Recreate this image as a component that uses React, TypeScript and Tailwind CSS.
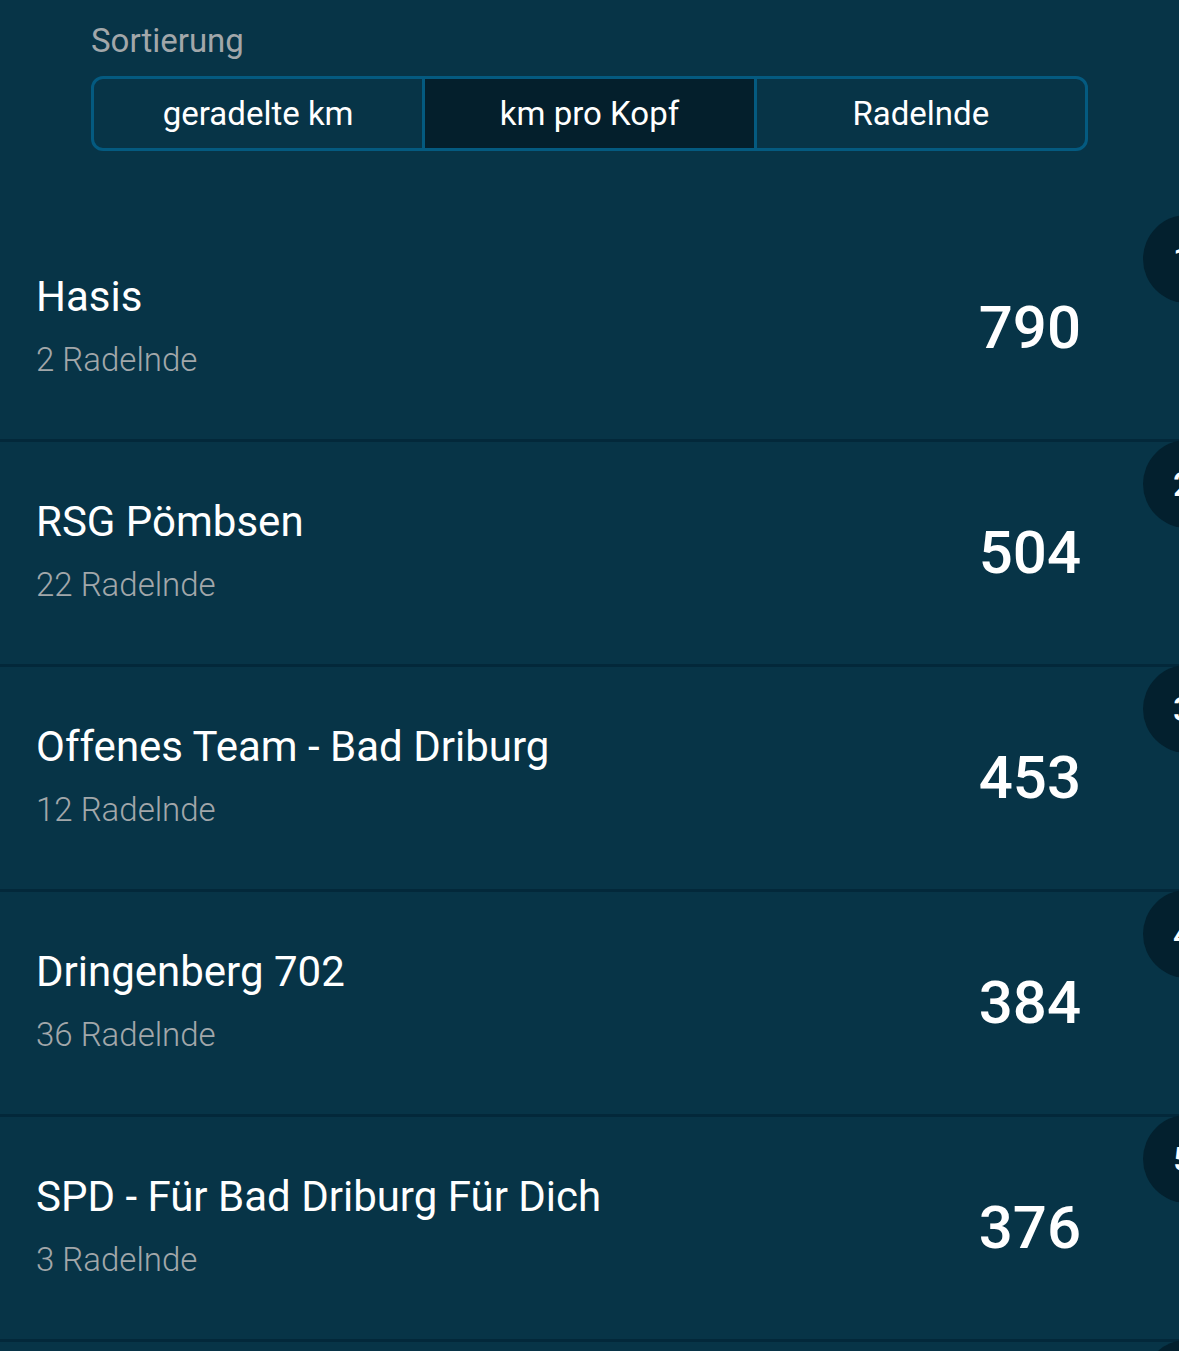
import React from 'react';

type Team = {
    rank: number;
    name: string;
    riders: number;
    km: number;
};

const teams: Team[] = [
    { rank: 1, name: 'Hasis', riders: 2, km: 790 },
    { rank: 2, name: 'RSG Pömbsen', riders: 22, km: 504 },
    { rank: 3, name: 'Offenes Team - Bad Driburg', riders: 12, km: 453 },
    { rank: 4, name: 'Dringenberg 702', riders: 36, km: 384 },
    { rank: 5, name: 'SPD - Für Bad Driburg Für Dich', riders: 3, km: 376 },
    { rank: 6, name: 'Radtreff Bad Driburg', riders: 9, km: 341 },
];

const tabs = ['geradelte km', 'km pro Kopf', 'Radelnde'];

export default function App() {
    const active = 1;

    return (
        <div
            className="w-[1179px] h-[1351px] overflow-hidden bg-[#073447] text-white"
            style={{ fontFamily: 'Roboto, "Noto Sans", sans-serif' }}
        >
            <div className="px-[91px] pt-[21px]">
                <div className="text-[33px] leading-[40px] text-[#a2a7aa]">Sortierung</div>
                <div className="mt-[15px] flex h-[75px] rounded-[12px] border-[3px] border-[#045a80] overflow-hidden">
                    {tabs.map((tab, i) => (
                        <div
                            key={tab}
                            className={`flex-1 flex items-center justify-center text-[33px] ${i > 0 ? 'border-l-[3px] border-[#045a80]' : ''} ${i === active ? 'bg-[#041f2c]' : ''}`}
                        >
                            {tab}
                        </div>
                    ))}
                </div>
            </div>

            <div className="mt-[66px]">
                {teams.map(team => (
                    <div
                        key={team.rank}
                        className="relative h-[225px] border-b-[3px] border-[#03283a] flex items-center pl-[36px] pr-[98px]"
                    >
                        <div className="flex-1 mb-[4px]">
                            <div className="text-[42px] leading-[48px]">{team.name}</div>
                            <div className="mt-[19px] text-[33px] leading-[40px] font-light text-[#a2a7aa]">
                                {team.riders} Radelnde
                            </div>
                        </div>
                        <div className="text-[60px] leading-[60px] font-medium">{team.km}</div>
                        <div className="absolute left-[1143px] top-[-2px] w-[88px] h-[88px] rounded-full bg-[#03202e] flex items-center justify-start pl-[30px] text-[34px] font-medium">
                            {team.rank}
                        </div>
                    </div>
                ))}
            </div>
        </div>
    );
}
